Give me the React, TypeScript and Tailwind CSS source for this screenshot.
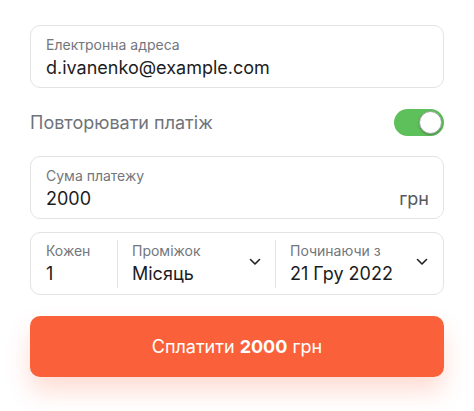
import React from "react";

function Chevron() {
  return (
    <svg width="12" height="8" viewBox="0 0 12 8" fill="none" className="shrink-0">
      <path d="M1.5 1.5 L6 6 L10.5 1.5" stroke="#222" strokeWidth="1.6" strokeLinecap="round" strokeLinejoin="round" />
    </svg>
  );
}

export default function App() {
  return (
    <div className="w-[474px] h-[411px] bg-white px-[30px] pt-[25px] text-[#1c1c1e]" style={{ fontFamily: "Inter, 'Noto Sans', sans-serif" }}>
      <div className="h-[63px] rounded-[10px] border border-[#e3e3e5] pl-[15px] pt-[10px]">
        <div className="text-[14px] leading-[17px] text-[#72767d]">Електронна адреса</div>
        <div className="text-[18px] leading-[24px] mt-[3px]">d.ivanenko@example.com</div>
      </div>

      <div className="mt-[21px] h-[27px] flex items-center justify-between">
        <span className="text-[18px] text-[#6f737a]">Повторювати платіж</span>
        <div className="w-[50px] h-[27px] rounded-full bg-[#5ec05a] flex items-center justify-end pr-[2px]">
          <div className="w-[23px] h-[23px] rounded-full bg-white border border-[#9aa39a] shadow-[0_1px_2px_rgba(0,0,0,0.25)]" />
        </div>
      </div>

      <div className="mt-[20px] h-[63px] rounded-[10px] border border-[#e3e3e5] pl-[15px] pr-[14px] pt-[10px]">
        <div className="text-[14px] leading-[17px] text-[#72767d]">Сума платежу</div>
        <div className="flex items-center justify-between mt-[3px]">
          <span className="text-[18px] leading-[24px]">2000</span>
          <span className="text-[18px] leading-[24px] text-[#55595f]">грн</span>
        </div>
      </div>

      <div className="mt-[13px] h-[63px] rounded-[10px] border border-[#e3e3e5] flex items-center">
        <div className="w-[86px] shrink-0 pl-[15px] pt-[1px] self-stretch flex flex-col justify-center">
          <div className="text-[14px] leading-[17px] text-[#72767d]">Кожен</div>
          <div className="text-[18px] leading-[24px] mt-[3px]">1</div>
        </div>
        <div className="w-px h-[48px] bg-[#e3e3e5]" />
        <div className="w-[157px] shrink-0 pl-[14px] pr-[14px] flex items-center justify-between self-stretch">
          <div className="pt-[1px]">
            <div className="text-[14px] leading-[17px] text-[#72767d]">Проміжок</div>
            <div className="text-[18px] leading-[24px] mt-[3px]">Місяць</div>
          </div>
          <div className="-mt-[4px]"><Chevron /></div>
        </div>
        <div className="w-px h-[48px] bg-[#e3e3e5]" />
        <div className="flex-1 pl-[14px] pr-[15px] flex items-center justify-between self-stretch">
          <div className="pt-[1px]">
            <div className="text-[14px] leading-[17px] text-[#72767d]">Починаючи з</div>
            <div className="text-[18px] leading-[24px] mt-[3px]">21 Гру 2022</div>
          </div>
          <div className="-mt-[4px]"><Chevron /></div>
        </div>
      </div>

      <button className="mt-[21px] w-full h-[61px] rounded-[10px] bg-[#fa613a] text-white text-[18px] shadow-[0_14px_24px_rgba(250,97,58,0.22)] flex items-center justify-center">
        <span>Сплатити <span className="font-bold">2000</span> грн</span>
      </button>
    </div>
  );
}
